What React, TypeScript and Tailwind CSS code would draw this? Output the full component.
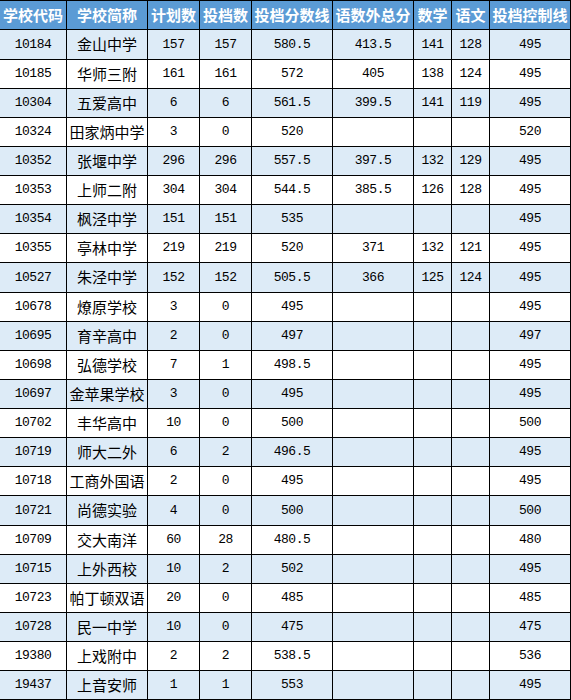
const headers = ['学校代码', '学校简称', '计划数', '投档数', '投档分数线', '语数外总分', '数学', '语文', '投档控制线'];

// column widths include the 1px right border
const widths = ['w-[67px]', 'w-[81px]', 'w-[52px]', 'w-[52px]', 'w-[81px]', 'w-[81px]', 'w-[38px]', 'w-[38px]', 'w-[81px]'];

const rows: string[][] = [
    ['10184', '金山中学', '157', '157', '580.5', '413.5', '141', '128', '495'],
    ['10185', '华师三附', '161', '161', '572', '405', '138', '124', '495'],
    ['10304', '五爱高中', '6', '6', '561.5', '399.5', '141', '119', '495'],
    ['10324', '田家炳中学', '3', '0', '520', '', '', '', '520'],
    ['10352', '张堰中学', '296', '296', '557.5', '397.5', '132', '129', '495'],
    ['10353', '上师二附', '304', '304', '544.5', '385.5', '126', '128', '495'],
    ['10354', '枫泾中学', '151', '151', '535', '', '', '', '495'],
    ['10355', '亭林中学', '219', '219', '520', '371', '132', '121', '495'],
    ['10527', '朱泾中学', '152', '152', '505.5', '366', '125', '124', '495'],
    ['10678', '燎原学校', '3', '0', '495', '', '', '', '495'],
    ['10695', '育辛高中', '2', '0', '497', '', '', '', '497'],
    ['10698', '弘德学校', '7', '1', '498.5', '', '', '', '495'],
    ['10697', '金苹果学校', '3', '0', '495', '', '', '', '495'],
    ['10702', '丰华高中', '10', '0', '500', '', '', '', '500'],
    ['10719', '师大二外', '6', '2', '496.5', '', '', '', '495'],
    ['10718', '工商外国语', '2', '0', '495', '', '', '', '495'],
    ['10721', '尚德实验', '4', '0', '500', '', '', '', '500'],
    ['10709', '交大南洋', '60', '28', '480.5', '', '', '', '480'],
    ['10715', '上外西校', '10', '2', '502', '', '', '', '495'],
    ['10723', '帕丁顿双语', '20', '0', '485', '', '', '', '485'],
    ['10728', '民一中学', '10', '0', '475', '', '', '', '475'],
    ['19380', '上戏附中', '2', '2', '538.5', '', '', '', '536'],
    ['19437', '上音安师', '1', '1', '553', '', '', '', '495'],
];

// a few rows are a pixel taller, as in the sheet
const tallRows = [0, 8, 16];

export default function App() {
    return (
        <div className="w-[571px] bg-white">
            {/* Header */}
            <div className="flex h-[30px] border-y border-black bg-[#5b9bd5]">
                {headers.map((h, i) => (
                    <div
                        key={h}
                        className={`${widths[i]} flex items-center justify-center border-r border-black text-[15px] font-bold text-white whitespace-nowrap`}
                        style={{ fontFamily: '"Noto Sans CJK SC", sans-serif' }}
                    >
                        {h}
                    </div>
                ))}
            </div>

            {rows.map((r, ri) => (
                <div
                    key={r[0]}
                    className={`flex border-b border-black ${tallRows.includes(ri) ? 'h-[30px]' : 'h-[29px]'} ${ri % 2 === 0 ? 'bg-[#ddebf7]' : 'bg-white'}`}
                >
                    {r.map((c, ci) =>
                        ci === 1 ? (
                            <div
                                key={ci}
                                className={`${widths[ci]} flex items-center justify-center border-r border-black text-[15px] text-black whitespace-nowrap`}
                                style={{ fontFamily: '"Noto Sans CJK SC", sans-serif' }}
                            >
                                {c}
                            </div>
                        ) : (
                            <div
                                key={ci}
                                className={`${widths[ci]} flex items-center justify-center border-r border-black text-[13px] tracking-[-0.5px] text-black`}
                                style={{ fontFamily: '"Liberation Mono", monospace' }}
                            >
                                {c}
                            </div>
                        )
                    )}
                </div>
            ))}
        </div>
    );
}
